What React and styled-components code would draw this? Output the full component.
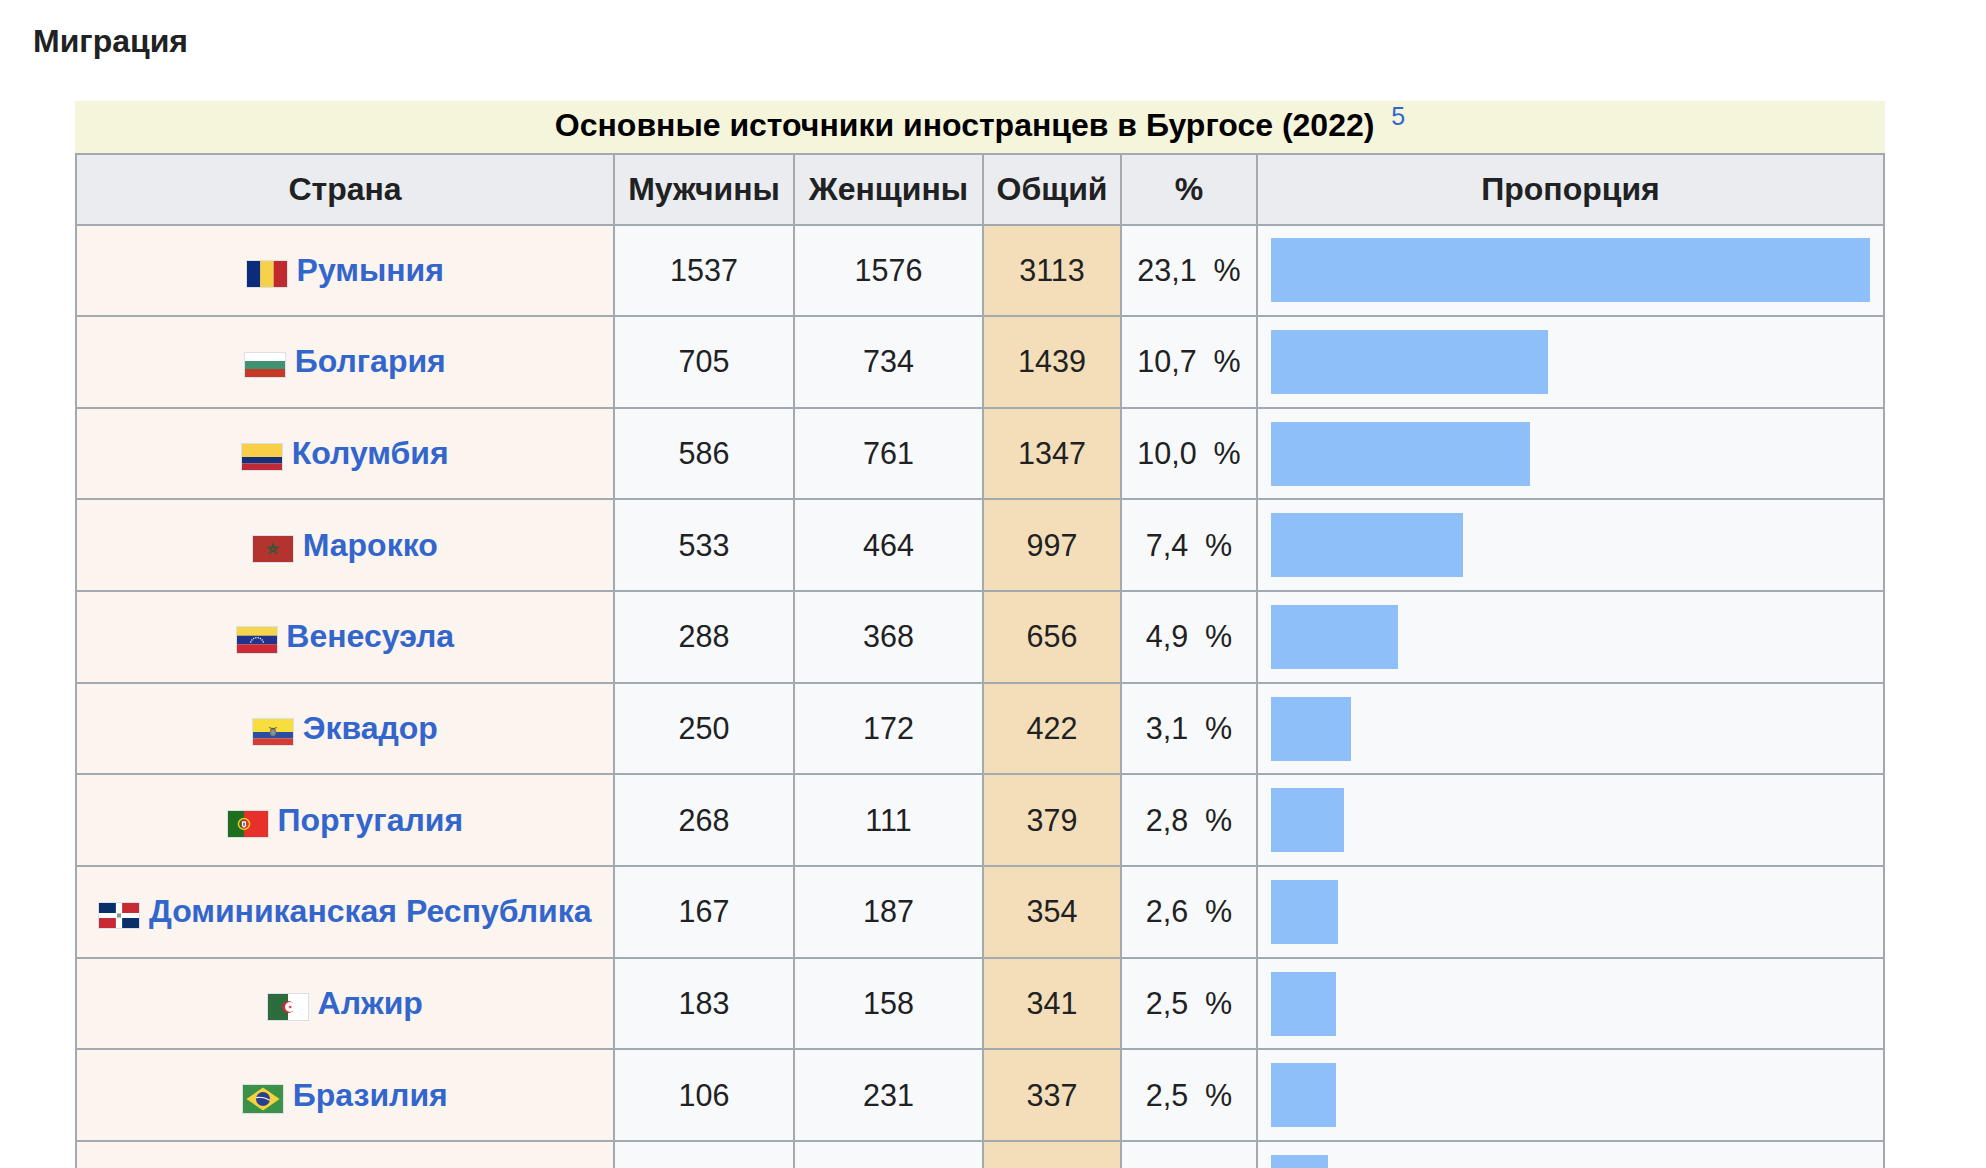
import React from 'react';
import styled, { createGlobalStyle } from 'styled-components';

const GlobalStyle = createGlobalStyle`
  html, body {
    margin: 0;
    padding: 0;
    background: #ffffff;
  }
  body {
    font-family: "Liberation Sans", Arial, sans-serif;
    color: #202122;
  }
`;

const Page = styled.div`
  padding: 23px 0 60px 33px;
`;

const Heading = styled.h3`
  margin: 0 0 41px;
  font-size: 32px;
  line-height: 37px;
  font-weight: bold;
  color: #202122;
`;

const Table = styled.table`
  margin-left: 42px;
  width: 1810px;
  border-collapse: collapse;
  table-layout: fixed;
  font-size: 30.5px;
  color: #202122;
  background: #f8f9fa;
`;

const Caption = styled.caption`
  background: #f5f5dc;
  font-size: 32px;
  font-weight: bold;
  color: #000000;
  line-height: 49px;
  padding-bottom: 3px;
  text-align: center;
`;

const Ref = styled.sup`
  font-size: 25px;
  font-weight: normal;
  line-height: 0;
  vertical-align: 11px;
  margin-left: 8px;
  color: #3366cc;
`;

const HeadCell = styled.th`
  height: 68.5px;
  padding: 0 8px;
  background: #eaecf0;
  border: 2px solid #a2a9b1;
  font-size: 32px;
  font-weight: bold;
  text-align: center;
  vertical-align: middle;
  white-space: nowrap;
`;

const Cell = styled.td`
  height: 89.67px;
  padding: 0 12px;
  border: 2px solid #a2a9b1;
  text-align: center;
  vertical-align: middle;
  white-space: nowrap;
  background: ${p => p.$tone === 'country' ? '#fcf4ef' : p.$tone === 'total' ? '#f3deb9' : '#f8f9fa'};
`;

const BarCell = styled(Cell)`
  text-align: left;
  padding: 0 13px;
`;

const Bar = styled.div`
  height: 64px;
  background: #8ebff9;
`;

const CountryLink = styled.a`
  color: #3366cc;
  font-size: 32px;
  font-weight: bold;
  text-decoration: none;
`;

const FlagFrame = styled.span`
  display: inline-block;
  vertical-align: middle;
  margin-top: 2px;
  border: 1px solid #dcdfe5;
  line-height: 0;

  svg {
    display: block;
    width: 40px;
    height: ${p => p.$h}px;
  }
`;

const flags = {
  ro: (
    <svg viewBox="0 0 30 20" preserveAspectRatio="none">
      <rect x="0" y="0" width="10" height="20" fill="#0b2c7b" />
      <rect x="10" y="0" width="10" height="20" fill="#f6d14a" />
      <rect x="20" y="0" width="10" height="20" fill="#c0292e" />
    </svg>
  ),
  bg: (
    <svg viewBox="0 0 50 30" preserveAspectRatio="none">
      <rect x="0" y="0" width="50" height="10" fill="#ffffff" />
      <rect x="0" y="10" width="50" height="10" fill="#3f9370" />
      <rect x="0" y="20" width="50" height="10" fill="#c53a27" />
    </svg>
  ),
  co: (
    <svg viewBox="0 0 30 20" preserveAspectRatio="none">
      <rect x="0" y="0" width="30" height="10" fill="#f9cf48" />
      <rect x="0" y="10" width="30" height="5" fill="#15307c" />
      <rect x="0" y="15" width="30" height="5" fill="#bd2a33" />
    </svg>
  ),
  ma: (
    <svg viewBox="0 0 30 20" preserveAspectRatio="none">
      <rect x="0" y="0" width="30" height="20" fill="#b3342f" />
      <path d="M15 6 L17.35 13.24 L11.2 8.76 L18.8 8.76 L12.65 13.24 Z" fill="none" stroke="#2a5a38" strokeWidth="0.9" />
    </svg>
  ),
  ve: (
    <svg viewBox="0 0 30 20" preserveAspectRatio="none">
      <rect x="0" y="0" width="30" height="6.67" fill="#f6d54a" />
      <rect x="0" y="6.67" width="30" height="6.67" fill="#21338a" />
      <rect x="0" y="13.33" width="30" height="6.67" fill="#cc2a34" />
      {[200, 220, 240, 260, 280, 300, 320, 340].map(a => (
        <circle
          key={a}
          cx={15 + 5 * Math.cos((a * Math.PI) / 180)}
          cy={13.2 + 5 * Math.sin((a * Math.PI) / 180)}
          r="0.55"
          fill="#ffffff"
        />
      ))}
    </svg>
  ),
  ec: (
    <svg viewBox="0 0 30 20" preserveAspectRatio="none">
      <rect x="0" y="0" width="30" height="10" fill="#f8dd3f" />
      <rect x="0" y="10" width="30" height="5" fill="#2c4ea0" />
      <rect x="0" y="15" width="30" height="5" fill="#d63b33" />
      <ellipse cx="15" cy="10" rx="2.4" ry="3.2" fill="#8b7a4c" />
      <ellipse cx="15" cy="10.3" rx="1.4" ry="2" fill="#6f9ac5" />
      <path d="M12 6.5 L15 7.6 L18 6.5" fill="none" stroke="#5b4526" strokeWidth="0.6" />
    </svg>
  ),
  pt: (
    <svg viewBox="0 0 30 20" preserveAspectRatio="none">
      <rect x="0" y="0" width="12" height="20" fill="#1f6e1f" />
      <rect x="12" y="0" width="18" height="20" fill="#e8302a" />
      <circle cx="12" cy="10" r="4.2" fill="none" stroke="#f3d21f" strokeWidth="1.1" />
      <path d="M10.2 7.6 H13.8 V11 Q13.8 12.9 12 13.2 Q10.2 12.9 10.2 11 Z" fill="#ffffff" stroke="#d52b1e" strokeWidth="0.7" />
      <rect x="11.5" y="9" width="1" height="2.4" fill="#1d3f9a" />
    </svg>
  ),
  do: (
    <svg viewBox="0 0 32 20" preserveAspectRatio="none">
      <rect x="0" y="0" width="32" height="20" fill="#ffffff" />
      <rect x="0" y="0" width="13.5" height="8" fill="#0b2f68" />
      <rect x="18.5" y="0" width="13.5" height="8" fill="#c72b33" />
      <rect x="0" y="12" width="13.5" height="8" fill="#c72b33" />
      <rect x="18.5" y="12" width="13.5" height="8" fill="#0b2f68" />
      <rect x="14.4" y="8.4" width="3.2" height="3.2" fill="#8a9a86" />
    </svg>
  ),
  dz: (
    <svg viewBox="0 0 30 20" preserveAspectRatio="none">
      <rect x="0" y="0" width="15" height="20" fill="#2c6b3c" />
      <rect x="15" y="0" width="15" height="20" fill="#ffffff" />
      <circle cx="15.3" cy="10" r="4.6" fill="#d2283a" />
      <circle cx="16.6" cy="10" r="3.8" fill="#ffffff" />
      <path d="M15 10 L17.9 9 L16.2 11.6 L16.2 8.4 L17.9 11 Z" fill="#d2283a" />
    </svg>
  ),
  br: (
    <svg viewBox="0 0 20 14" preserveAspectRatio="none">
      <rect x="0" y="0" width="20" height="14" fill="#3a9147" />
      <polygon points="1.7,7 10,1.3 18.3,7 10,12.7" fill="#f6d33d" />
      <circle cx="10" cy="7" r="3.5" fill="#2b3f8c" />
      <path d="M6.6 6.3 Q10 5.6 13.4 7.6" fill="none" stroke="#ffffff" strokeWidth="0.6" />
    </svg>
  ),
  hn: (
    <svg viewBox="0 0 30 20" preserveAspectRatio="none">
      <rect x="0" y="0" width="30" height="20" fill="#1b4fa8" />
      <rect x="0" y="6.67" width="30" height="6.67" fill="#ffffff" />
      <circle cx="15" cy="10" r="0.7" fill="#1b4fa8" />
      <circle cx="11" cy="8.5" r="0.7" fill="#1b4fa8" />
      <circle cx="11" cy="11.5" r="0.7" fill="#1b4fa8" />
      <circle cx="19" cy="8.5" r="0.7" fill="#1b4fa8" />
      <circle cx="19" cy="11.5" r="0.7" fill="#1b4fa8" />
    </svg>
  ),
};

const columns = ['Страна', 'Мужчины', 'Женщины', 'Общий', '%', 'Пропорция'];
const widths = [538, 180, 189, 138, 136, 627];

const rows = [
  { flag: 'ro', h: 26, name: 'Румыния', men: 1537, women: 1576, total: 3113, pct: '23,1' },
  { flag: 'bg', h: 24, name: 'Болгария', men: 705, women: 734, total: 1439, pct: '10,7' },
  { flag: 'co', h: 26, name: 'Колумбия', men: 586, women: 761, total: 1347, pct: '10,0' },
  { flag: 'ma', h: 26, name: 'Марокко', men: 533, women: 464, total: 997, pct: '7,4' },
  { flag: 've', h: 26, name: 'Венесуэла', men: 288, women: 368, total: 656, pct: '4,9' },
  { flag: 'ec', h: 26, name: 'Эквадор', men: 250, women: 172, total: 422, pct: '3,1' },
  { flag: 'pt', h: 26, name: 'Португалия', men: 268, women: 111, total: 379, pct: '2,8' },
  { flag: 'do', h: 25, name: 'Доминиканская Республика', men: 167, women: 187, total: 354, pct: '2,6' },
  { flag: 'dz', h: 26, name: 'Алжир', men: 183, women: 158, total: 341, pct: '2,5' },
  { flag: 'br', h: 28, name: 'Бразилия', men: 106, women: 231, total: 337, pct: '2,5' },
  { flag: 'hn', h: 26, name: 'Гондурас', men: 118, women: 175, total: 293, pct: '2,2' },
];

const maxPct = 23.1;

function MigrationTable() {
  return (
    <Table>
      <Caption>
        Основные источники иностранцев в Бургосе (2022) <Ref>5</Ref>
      </Caption>
      <colgroup>
        {widths.map((w, i) => (
          <col key={i} style={{ width: w }} />
        ))}
      </colgroup>
      <thead>
        <tr>
          {columns.map(c => (
            <HeadCell key={c}>{c}</HeadCell>
          ))}
        </tr>
      </thead>
      <tbody>
        {rows.map(r => {
          const value = parseFloat(r.pct.replace(',', '.'));
          return (
            <tr key={r.name}>
              <Cell $tone="country">
                <FlagFrame $h={r.h}>{flags[r.flag]}</FlagFrame>
                {'\u00a0'}
                <CountryLink href="#">{r.name}</CountryLink>
              </Cell>
              <Cell>{r.men}</Cell>
              <Cell>{r.women}</Cell>
              <Cell $tone="total">{r.total}</Cell>
              <Cell>{r.pct}{'\u00a0\u00a0'}%</Cell>
              <BarCell>
                <Bar style={{ width: `${(value / maxPct) * 100}%` }} />
              </BarCell>
            </tr>
          );
        })}
      </tbody>
    </Table>
  );
}

export default function App() {
  return (
    <Page>
      <GlobalStyle />
      <Heading>Миграция</Heading>
      <MigrationTable />
    </Page>
  );
}
